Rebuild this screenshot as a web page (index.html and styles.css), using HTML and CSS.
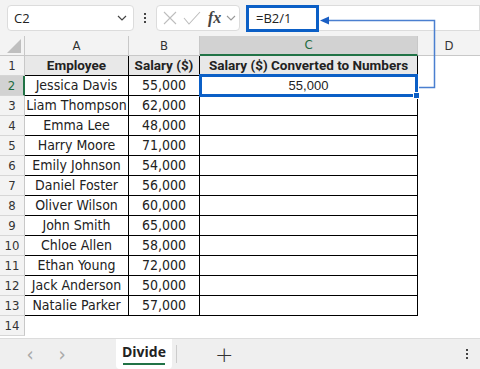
FILE: index.html
```html
<!DOCTYPE html>
<html lang="en">
<head>
    <meta charset="UTF-8">
    <title>Divide</title>
    <link rel="stylesheet" href="styles.css">
</head>
<body>
    <div class="app">
        <div class="topbar">
            <div class="namebox">
                <span>C2</span>
                <svg class="chev" width="10" height="6" viewBox="0 0 10 6"><path d="M1 1l4 4 4-4" fill="none" stroke="#444" stroke-width="1.2"/></svg>
            </div>
            <div class="vdots"><i></i><i></i><i></i></div>
            <div class="fxbox">
                <svg width="16" height="16" viewBox="0 0 16 16"><path d="M2 2l12 12M14 2L2 14" stroke="#bdbdbd" stroke-width="1.1"/></svg>
                <svg width="18" height="16" viewBox="0 0 18 16"><path d="M1 8l5 6L17 2" fill="none" stroke="#bdbdbd" stroke-width="1.1"/></svg>
                <span class="fx">fx</span>
                <svg width="10" height="6" viewBox="0 0 10 6"><path d="M1 1l4 4 4-4" fill="none" stroke="#999" stroke-width="1.1"/></svg>
            </div>
            <div class="formula">=B2/1</div>
            <div class="formula-rest"></div>
        </div>

        <div class="sheet">
            <div class="corner"><svg width="14" height="14" viewBox="0 0 14 14"><path d="M14 0v14H0z" fill="#bfbfbf"/></svg></div>
            <div class="colhead">A</div>
            <div class="colhead">B</div>
            <div class="colhead active">C</div>
            <div class="colhead last">D</div>
        </div>
        <div class="rows" id="rows"></div>

        <svg class="arrow" width="480" height="100" viewBox="0 0 480 100">
            <path d="M328 20.5H434.5V87.5H419" fill="none" stroke="#4a7fd0" stroke-width="1.5"/>
            <path d="M320 20.5l9-4v8z" fill="#1a5fc4"/>
        </svg>

        <div class="tabbar">
            <span class="nav">&#8249;</span>
            <span class="nav">&#8250;</span>
            <div class="tab">Divide</div>
            <span class="sep"></span>
            <span class="plus">+</span>
            <div class="vdots menu"><i></i><i></i><i></i></div>
        </div>
    </div>

    <script>
        const people = [
            ['Jessica Davis', '55,000'],
            ['Liam Thompson', '62,000'],
            ['Emma Lee', '48,000'],
            ['Harry Moore', '71,000'],
            ['Emily Johnson', '54,000'],
            ['Daniel Foster', '56,000'],
            ['Oliver Wilson', '60,000'],
            ['John Smith', '65,000'],
            ['Chloe Allen', '58,000'],
            ['Ethan Young', '72,000'],
            ['Jack Anderson', '50,000'],
            ['Natalie Parker', '57,000']
        ];

        const rows = document.getElementById('rows');

        function addRow(num, cells, cls) {
            const row = document.createElement('div');
            row.className = 'row ' + (cls || '');
            row.innerHTML = `<div class="rowhead">${num}</div>` +
                cells.map((c, i) => `<div class="cell c${i}">${c}</div>`).join('');
            rows.appendChild(row);
        }

        addRow(1, ['Employee', 'Salary ($)', 'Salary ($) Converted to Numbers'], 'title');
        people.forEach((p, i) => {
            const conv = i === 0 ? '<span class="num">55,000</span><i class="handle"></i>' : '';
            addRow(i + 2, [p[0], p[1], conv], i === 0 ? 'sel' : '');
        });
        addRow(14, [], 'empty');
    </script>
</body>
</html>
```

FILE: styles.css
```css
body {
    margin: 0;
    font-family: "DejaVu Sans Condensed", sans-serif;
    color: #222;
    background: #fff;
}
.app {
    position: relative;
    width: 480px;
    height: 369px;
    overflow: hidden;
}
.topbar {
    display: flex;
    align-items: center;
    height: 36px;
    padding: 3px 0 0 7px;
    box-sizing: border-box;
    background: #f3f3f3;
}
.namebox {
    width: 127px;
    height: 26px;
    box-sizing: border-box;
    border: 1px solid #dcdcdc;
    border-radius: 4px;
    background: #fff;
    display: flex;
    align-items: center;
    justify-content: space-between;
    padding: 0 6px 0 6px;
    font-family: "Open Sans", sans-serif;
    font-size: 13px;
    margin-bottom: 3px;
}
.vdots {
    display: flex;
    flex-direction: column;
    gap: 2px;
    width: 22px;
    align-items: center;
    margin-bottom: 3px;
}
.vdots i {
    width: 2px;
    height: 2px;
    background: #444;
}
.fxbox {
    width: 84px;
    height: 26px;
    box-sizing: border-box;
    border: 1px solid #dcdcdc;
    border-radius: 4px;
    background: #fff;
    display: flex;
    align-items: center;
    gap: 5px;
    padding-left: 5px;
    margin-bottom: 3px;
}
.fx {
    font-family: "Liberation Serif", serif;
    font-style: italic;
    font-weight: bold;
    font-size: 16px;
    color: #444;
    margin-left: 2px;
}
.formula {
    margin-left: 6px;
    width: 73px;
    height: 27px;
    box-sizing: border-box;
    border: 3px solid #0b5fc6;
    background: #fff;
    font-family: "Open Sans", sans-serif;
    font-size: 13px;
    line-height: 21px;
    padding-left: 7px;
    margin-bottom: 3px;
}
.formula-rest {
    flex: 1;
    height: 26px;
    box-sizing: border-box;
    border: 1px solid #dcdcdc;
    border-left: none;
    background: #fff;
    margin-bottom: 3px;
}
.sheet, .row {
    display: grid;
    grid-template-columns: 25px 104px 71px 218px 1fr;
}
.sheet {
    height: 19px;
    background: #f3f3f3;
    border-bottom: 1px solid #c8c8c8;
}
.corner {
    display: flex;
    align-items: flex-end;
    justify-content: flex-end;
    padding: 0 3px 3px 0;
    border-right: 1px solid #c8c8c8;
}
.colhead {
    font-size: 13px;
    text-align: center;
    line-height: 19px;
    border-right: 1px solid #c8c8c8;
    color: #333;
}
.colhead.active {
    background: #d2d2d2;
    border-bottom: 2px solid #217346;
    color: #1e6b40;
    line-height: 18px;
}
.colhead.last {
    border-right: none;
}
.row {
    height: 20px;
}
.rowhead {
    background: #f3f3f3;
    border-right: 1px solid #c8c8c8;
    border-bottom: 1px solid #d6d6d6;
    font-size: 13px;
    color: #333;
    text-align: center;
    line-height: 19px;
}
.row.sel .rowhead {
    background: #d2d2d2;
    border-right: 2px solid #217346;
    color: #1e6b40;
}
.cell {
    font-size: 14px;
    text-align: center;
    line-height: 19px;
    border-right: 1px solid #000;
    border-bottom: 1px solid #000;
    white-space: nowrap;
}
.row.title .cell {
    background: #e8e8e8;
    font-family: Roboto, sans-serif;
    font-weight: bold;
    font-size: 13.5px;
    overflow: hidden;
}
.row.sel .c2 {
    position: relative;
}
.num {
    font-family: "Liberation Sans", Arial, sans-serif;
    font-size: 13px;
}
.row.sel .c2::after {
    content: "";
    position: absolute;
    left: -1px;
    top: -2px;
    right: -1px;
    bottom: -2px;
    border: 3px solid #0b5fc6;
}
.handle {
    position: absolute;
    right: -3px;
    bottom: -4px;
    width: 5px;
    height: 5px;
    background: #0b5fc6;
    border: 1px solid #fff;
    z-index: 1;
}
.arrow {
    position: absolute;
    left: 0;
    top: 0;
    pointer-events: none;
}
.tabbar {
    position: absolute;
    left: 0;
    right: 0;
    bottom: 0;
    height: 30px;
    background: #efefef;
    border-top: 1px solid #dcdcdc;
    display: flex;
    align-items: center;
}
.nav {
    color: #aaa;
    font-size: 20px;
    width: 32px;
    text-align: center;
    margin-left: 14px;
    margin-right: -14px;
    line-height: 30px;
}
.nav + .nav {
    margin-left: 14px;
}
.tab {
    margin-left: 52px;
    align-self: stretch;
    width: 56px;
    background: #fff;
    border-radius: 0 0 4px 4px;
    font-family: "Open Sans", sans-serif;
    font-weight: bold;
    font-size: 14px;
    text-align: center;
    line-height: 26px;
    position: relative;
}
.tab::after {
    content: "";
    position: absolute;
    left: 7px;
    right: 7px;
    bottom: 4px;
    height: 2px;
    background: #217346;
}
.sep {
    width: 1px;
    height: 18px;
    background: #ccc;
    margin-left: 4px;
}
.plus {
    margin-left: 38px;
    font-size: 22px;
    font-weight: 300;
    color: #333;
    font-family: "DejaVu Sans", sans-serif;
}
.vdots.menu {
    margin-left: auto;
    margin-right: 2px;
    margin-bottom: 0;
}
```
